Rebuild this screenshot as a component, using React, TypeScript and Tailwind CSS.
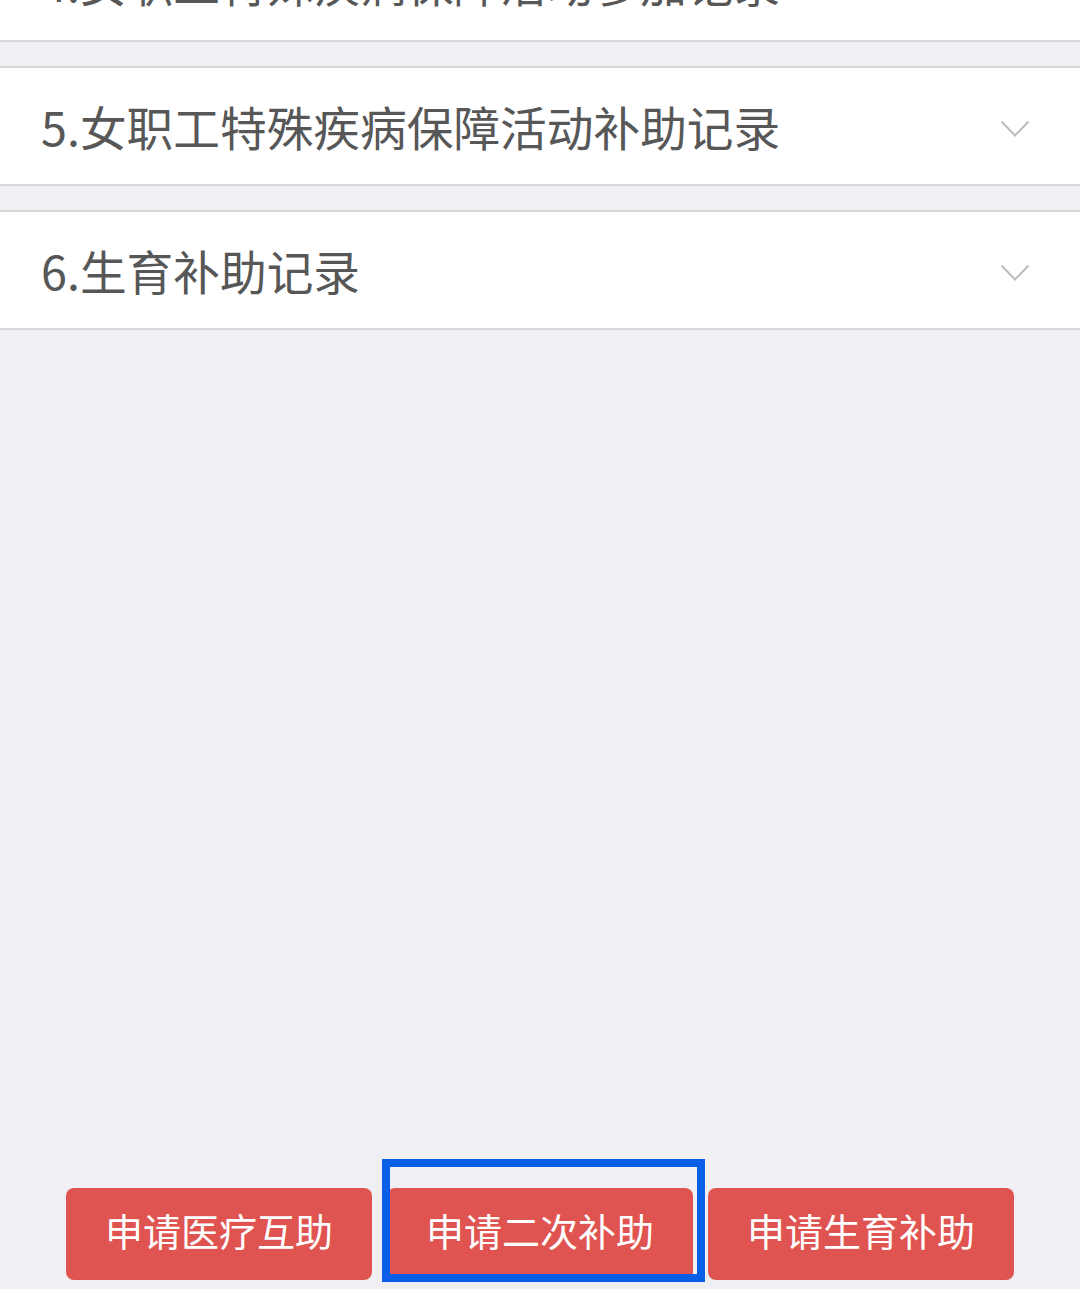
const records = [
  "4.女职工特殊疾病保障活动参加记录",
  "5.女职工特殊疾病保障活动补助记录",
  "6.生育补助记录",
];

const actions = ["申请医疗互助", "申请二次补助", "申请生育补助"];

function Chevron() {
  return (
    <svg width="30" height="18" viewBox="0 0 30 18" fill="none" className="mt-[6px] shrink-0">
      <path d="M1.5 1.5 L15 15.5 L28.5 1.5" stroke="#bdbdc2" strokeWidth="2" />
    </svg>
  );
}

function RecordRow({ title }: { title: string }) {
  return (
    <div className="flex h-[120px] items-center justify-between border-y-2 border-[#d7d7dc] bg-white pl-[41px] pr-[50px]">
      <span className="text-[46.7px] leading-none text-[#575757]">{title}</span>
      <Chevron />
    </div>
  );
}

export default function App() {
  return (
    <div
      className="flex h-[1289px] w-[1080px] flex-col overflow-hidden bg-[#efeff4]"
      style={{ fontFamily: '"Noto Sans CJK SC", "Noto Sans", sans-serif' }}
    >
      <div className="-mt-[78px] flex flex-col gap-[24px]">
        {records.map((r) => (
          <RecordRow key={r} title={r} />
        ))}
      </div>

      <div className="mt-auto flex gap-[15px] pb-[9px] pl-[66px]">
        {actions.map((a, i) => (
          <div key={a} className="relative">
            <button className="flex h-[92px] w-[306px] items-center justify-center rounded-[8px] bg-[#df5450] pb-[8px] text-[38px] leading-none text-white">
              {a}
            </button>
            {i === 1 && (
              <div className="pointer-events-none absolute -bottom-[2px] -left-[5px] -right-[12px] -top-[29px] border-[8px] border-[#0b5fe6]" />
            )}
          </div>
        ))}
      </div>
    </div>
  );
}
